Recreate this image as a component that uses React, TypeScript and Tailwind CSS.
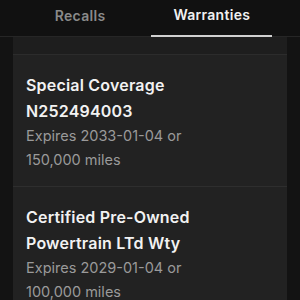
import React from "react";

const items = [
  { title: ["Special Coverage", "N252494003"], desc: ["Expires 2033-01-04 or", "150,000 miles"] },
  { title: ["Certified Pre-Owned", "Powertrain LTd Wty"], desc: ["Expires 2029-01-04 or", "100,000 miles"] },
];

export default function App() {
  return (
    <div className="w-[300px] h-[300px] overflow-hidden bg-[#131313] flex flex-col" style={{ fontFamily: "Inter, 'Noto Sans', sans-serif" }}>
      <div className="h-[37px] shrink-0 bg-[#111111] border-b border-[#262626] flex justify-center gap-[24px] pl-[5px]">
        <div className="px-[22px] flex items-center pb-[6px] text-[14px] font-semibold tracking-[0.3px] text-[#8a8a8a]">Recalls</div>
        <div className="px-[22px] flex items-center pb-[6px] text-[14px] font-semibold tracking-[0.3px] text-[#f0f0f0] border-b-2 border-[#d0d0d0] -mb-px">Warranties</div>
      </div>
      <div className="flex-1 flex px-[13px]">
        <div className="flex-1 bg-[#222222] flex flex-col">
          <div className="h-[18px] bg-[#1e1e1e] border-b border-[#2c2c2c]" />
          {items.map((it, i) => (
            <div key={i} className={`px-[13px] pt-[17px] pb-[14px] ${i === 0 ? "border-b border-[#2e2e2e]" : ""}`}>
              {it.title.map((t) => (
                <div key={t} className="text-[16px] leading-[26px] font-semibold tracking-[0.2px] text-[#f2f2f2]">{t}</div>
              ))}
              {it.desc.map((t) => (
                <div key={t} className="text-[14.5px] leading-[24px] text-[#9a9a9a]">{t}</div>
              ))}
            </div>
          ))}
        </div>
      </div>
    </div>
  );
}
